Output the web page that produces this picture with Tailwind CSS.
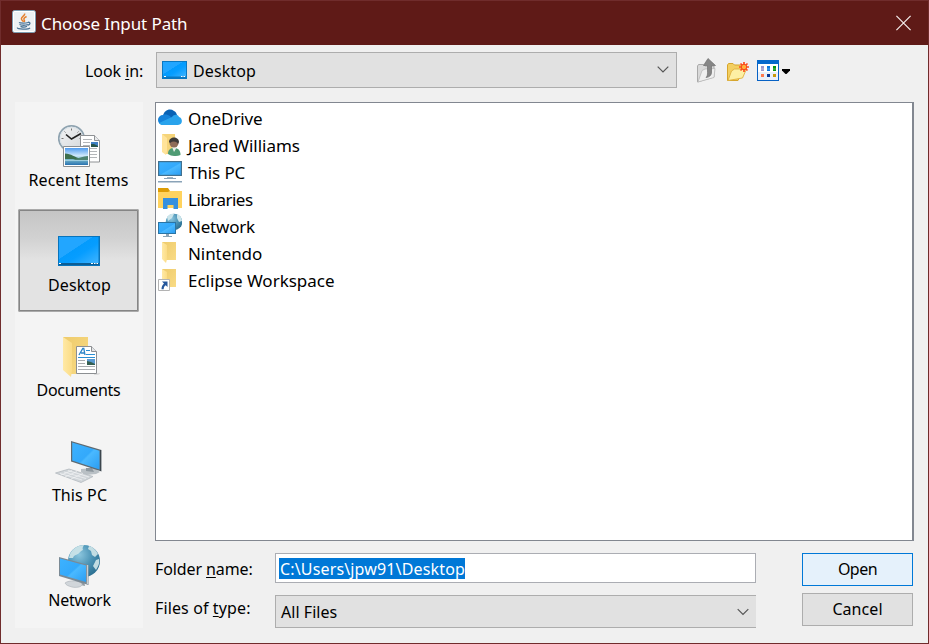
<!DOCTYPE html>
<html lang="en">
<head>
<meta charset="utf-8">
<title>Choose Input Path</title>
<script src="https://cdn.jsdelivr.net/npm/@tailwindcss/browser@4"></script>
</head>
<body class="h-[644px] w-[929px] overflow-hidden font-['Noto_Sans','Open_Sans',sans-serif] text-[16px] text-black">

<!-- shared gradients -->
<svg class="absolute h-0 w-0">
  <defs>
    <linearGradient id="screen" x1="0" y1="0" x2="1" y2="1">
      <stop offset="0" stop-color="#22a6ff"/><stop offset=".42" stop-color="#22a6ff"/><stop offset=".43" stop-color="#039bfd"/><stop offset=".6" stop-color="#069dff"/><stop offset="1" stop-color="#40b4ff"/>
    </linearGradient>
    <linearGradient id="mon" x1="0" y1="0" x2="1" y2="1">
      <stop offset="0" stop-color="#3db2ff"/><stop offset=".5" stop-color="#33a9fb"/><stop offset=".55" stop-color="#4ab9ff"/><stop offset="1" stop-color="#2a9df2"/>
    </linearGradient>
    <linearGradient id="fold" x1="0" y1="0" x2="1" y2="1">
      <stop offset="0" stop-color="#eecb6c"/><stop offset="1" stop-color="#f9db85"/>
    </linearGradient>
    <linearGradient id="flap" x1="0" y1="0" x2="1" y2="0">
      <stop offset="0" stop-color="#ffe9a6"/><stop offset="1" stop-color="#fbdc86"/>
    </linearGradient>
    <radialGradient id="globe" cx=".35" cy=".3" r=".8">
      <stop offset="0" stop-color="#8cc6de"/><stop offset=".5" stop-color="#4c94b6"/><stop offset="1" stop-color="#276a8c"/>
    </radialGradient>
    <linearGradient id="land" x1="0" y1="0" x2="0" y2="1">
      <stop offset="0" stop-color="#4f9bef"/><stop offset=".45" stop-color="#cfe8fb"/><stop offset=".7" stop-color="#6fb2c9"/><stop offset="1" stop-color="#2a72b0"/>
    </linearGradient>
    <linearGradient id="face" x1="0" y1="0" x2="1" y2="1">
      <stop offset="0" stop-color="#f4f5f6"/><stop offset="1" stop-color="#d3d6d9"/>
    </linearGradient>
  </defs>
</svg>

<div class="flex h-[644px] w-[929px] flex-col border border-[#702c2c] bg-[#f0f0f0]">
  <header class="flex h-11 shrink-0 items-center bg-[#5f1a17] pl-[11px] pr-4 text-white">
    <svg class="-mt-[3px] mr-[5px] h-6 w-6 shrink-0" viewBox="0 0 24 24">
      <rect x=".5" y=".5" width="23" height="22" rx="2" fill="#edf1f4" stroke="#7c9cb1"/>
      <rect x="1.5" y="1.5" width="21" height="20" rx="1" fill="none" stroke="#fff"/>
      <path d="M12.600 3.500c1 2-3.200 3-3.200 5.200 0 1.400 1.500 2 2.100 3.100M14.600 6.500c-1.500.7-3.200 1.700-2.600 3 .4.8 1 1.400.2 2.500" fill="none" stroke="#e5812f" stroke-width="1.500"/>
      <path d="M7 12.500c1 .8 7 .8 9 0M7.500 14.500c2 1 6.500 1 8.300 0M8.500 16.300c2 .9 5 .9 6.500 0M16 12.300c2.800-.5 2.600 2.200-.4 3M5.500 17.500c-1 2 11 2.200 12.500.3" fill="none" stroke="#4a7496" stroke-width="1.300"/>
    </svg>
    <h1 class="flex-1 pt-[2px] text-[17px] leading-6 tracking-[-0.1px]">Choose Input Path</h1>
    <svg class="h-4 w-4" viewBox="0 0 16 16"><path d="M.4.9 14.600 15.100M14.600.9.4 15.100" stroke="#f6efee" stroke-width="1.200" fill="none"/></svg>
  </header>

  <div class="flex h-[57px] shrink-0 items-start pt-[7px]">
    <label class="w-[155px] pl-[84px] pt-[7px] leading-6 tracking-[-0.05px]">Look <span class="underline decoration-1 underline-offset-2">i</span>n:</label>
    <div class="flex h-9 w-[521px] items-center border border-[#adadad] bg-[#e1e1e1] pl-[5px] pr-[7px]">
      <svg class="h-[18px] w-[25px]" viewBox="0 0 25 18"><rect width="25" height="18" fill="#0a78c2"/><rect x="1" y="1" width="23" height="14.500" fill="url(#screen)"/><path d="M2 15.500h2M19 15.500h1.500M21.500 15.500H23" stroke="#fff"/></svg>
      <span class="ml-[6px] flex-1 pt-[2px] leading-6 tracking-[0.1px]">Desktop</span>
      <svg class="h-3 w-3" viewBox="0 0 12 12"><path d="m.7 2.700 5.300 5.300 5.300-5.300" fill="none" stroke="#555" stroke-width="1.200"/></svg>
    </div>
    <div class="flex items-start pl-5 pt-[6px]">
      <svg class="h-[25px] w-5" viewBox="0 0 20 25">
        <path d="M.5 24V8l1-1.500h5L8 8h9v11z" fill="#d9d9d9" stroke="#a9a9a9"/>
        <path d="M1 24 5 12.500l3-1.500 10-.5-1 9z" fill="#efefef" stroke="#b9b9b9" stroke-width=".8"/>
        <path d="M11 .5 18.500 7.500h-4V14c0 3-1.500 5-5.500 5.500 1.500-1.500 1.500-3 1.500-5V7.500h-4z" fill="#868686" stroke="#707070" stroke-width=".7"/>
      </svg>
      <svg class="ml-[10px] mt-1 h-5 w-[22px]" viewBox="0 0 22 20">
        <path d="M.5 18.500V3l1-1.500H6L7.500 3H16v5l-5 10.500z" fill="#f3cf61" stroke="#d6a52d"/>
        <path d="M1 18.500 4.500 9l3-2h12L15.500 16z" fill="#fdf0a4" stroke="#dfb140" stroke-width=".9"/>
        <path d="M17 0v10M12 5h10M13.500 1.500l7 7M20.500 1.500l-7 7" stroke="#ff4c1f" stroke-width="1.700"/><circle cx="17" cy="5" r="2.700" fill="#ffb03b" stroke="#f64a1c"/>
      </svg>
      <svg class="ml-2 mt-[2px] h-[21px] w-[22px]" viewBox="0 0 22 21">
        <rect x=".5" y=".5" width="21" height="20" fill="#fff" stroke="#0762c5"/><rect x="1" y="12" width="20" height="8" fill="#e9f0fa"/><rect width="22" height="4" fill="#0669cc"/>
        <path fill="#9c97cb" d="M4 6h3v5H4z"/><path fill="#0c7ae0" d="M10 6h3v5h-3z"/><path fill="#079510" d="M16 6h3v5h-3z"/>
        <path fill="#fff" d="M4 8.500h15v1H4z" opacity=".35"/>
        <path fill="#ff7b50" d="M4 14h3v3H4z"/><path fill="#0a3a99" d="M10 14h3v3h-3z"/><path fill="#c89a0a" d="M16 14h3v3h-3z"/>
      </svg>
      <svg class="ml-[3px] mt-[11px] h-[5px] w-2" viewBox="0 0 8 5"><path d="M0 0h8v1.500L4.500 5h-1L0 1.500z"/></svg>
    </div>
  </div>

  <main class="flex min-h-0 flex-1">
    <nav class="ml-[14px] flex h-[526px] w-32 shrink-0 flex-col gap-[2px] bg-[#f4f4f4] px-[3px] pt-[2px]">
      <div class="flex h-[103px] w-[121px] flex-col items-center pt-5">
        <svg class="h-[44px] w-[42px]" viewBox="0 0 42 44">
          <circle cx="13.500" cy="14.500" r="12.700" fill="url(#face)" stroke="#8fa3b0" stroke-width="1.800"/>
          <circle cx="13.500" cy="14.500" r="11.300" fill="none" stroke="#d9e2e8"/>
          <path d="M13.500 4.500v2M3.500 14.500h2M21.500 14.500h2M6.500 7.500l1 1M20.500 7.500l-1 1" stroke="#777"/>
          <path d="m8 10.500 5.500 4.500L23 9.500" fill="none" stroke="#222" stroke-width="1.600"/>
          <path d="M22.500 11.500h14l5 5V38h-19z" fill="#fff" stroke="#8e9194"/><path d="M36.500 11.500v5h5" fill="#e7e9eb" stroke="#8e9194"/>
          <path d="M25 15.500h9M25 18.500h7M25 21.500h7M25 24.500h14M25 27.500h14M32 30.500h7M32 33.500h7" stroke="#b3b6b9"/>
          <path fill="#3f7fc4" d="M33 18h7v5h-7z"/><path fill="#26544a" d="M33 20h3l4 2v1h-7z"/>
          <path d="M5.500 22.500h26v20h-26z" fill="#fff" stroke="#8b8f92"/><path fill="url(#land)" d="M7 24h23v17H7z"/>
          <path d="M7 29.500c6 0 10 4 16 5.500H7z" fill="#3d6f4d"/><path d="M15 36c5-2 10-3.500 15-4v4z" fill="#4e8371"/><path d="M7 36h23v1H7z" fill="#b4dce8" opacity=".7"/>
        </svg>
        <span class="leading-6 tracking-[0.15px]">Recent Items</span>
      </div>
      <div class="flex h-[103px] w-[121px] flex-col items-center rounded-[2px] border-2 border-[#858585] bg-[linear-gradient(#c5c5c5,#d2d2d2_28%,#e3e3e3_50%,#e3e3e3)] pt-[25px] outline outline-1 -outline-offset-1 outline-[#aaa]">
        <svg class="h-[30px] w-[42px]" viewBox="0 0 42 30"><rect width="42" height="30" fill="#0874bc"/><rect x="1" y="1" width="39.500" height="26" fill="url(#screen)"/><path d="M1 27h40v2H1z" fill="#0b5d95"/><path d="M1 27.500h2M33 27.500h2M36 27.500h1.500M38.500 27.500H40" stroke="#fff"/></svg>
        <span class="ml-[2px] mt-[7px] leading-6 tracking-[0.11px]">Desktop</span>
      </div>
      <div class="flex h-[103px] w-[121px] flex-col items-center pt-[22px]">
        <svg class="h-[42px] w-[42px]" viewBox="0 0 42 42">
          <path d="M5 1h25v37H13z" fill="url(#fold)"/><path d="M5 1l9 6v27l-1 7-8-7z" fill="url(#flap)"/>
          <path d="M36 37h7l-3 2h-4z" fill="#ddd"/>
          <path d="M18.500 10.500h15l5 5v22h-20z" fill="#fff" stroke="#8c8f92"/><path d="M33.500 10.500v5h5" fill="#e3e5e7" stroke="#8c8f92"/>
          <path d="m21 19 3.800-6.500h1L27 19M23 17h3.500" fill="none" stroke="#2a84c8" stroke-width="1.300"/>
          <path d="M28 14.500h4M28 18.500h9M20 21.500h17" stroke="#2b8fd3"/><path d="M20 24.500h7M20 27.500h7M20 30.500h17M20 33.500h17" stroke="#a9acb0"/>
          <path fill="#5a9ad2" d="M29 23h8v6h-8z"/><path fill="#355f51" d="m29 25 4 1 4 2v1h-8z"/>
        </svg>
        <span class="leading-6 tracking-[-0.25px]">Documents</span>
      </div>
      <div class="flex h-[103px] w-[121px] flex-col items-center pt-[22px]">
        <svg class="h-[42px] w-[50px]" viewBox="0 0 50 42">
          <path d="m27 28 13-1 6 4-4 2-10 1-5-3z" fill="#b9c0c5"/><path d="m32 27 6 0 2 4-8-1z" fill="#8d979e"/>
          <path d="M1.500 32 15 28l24 7.500L27 41.500z" fill="#d0d5d9" stroke="#b4babf" stroke-width=".8"/>
          <path d="m6 32.500 22 6.500M10 31l22 6.500M14 29.500l21 6.500M11 36l12-5.500M17 38l12-5.500M7 34l11-4.500" stroke="#f2f4f5" stroke-width=".7"/>
          <path d="M17 0 47.500 9v21.500L17 20.500z" fill="#5e6a72"/><path d="m18.200 1.500 27.300 8.200v18.800l-27.300-9z" fill="url(#mon)"/><path d="M46.500 9v21" stroke="#3c464d"/>
        </svg>
        <span class="ml-[2px] leading-6 tracking-[0.1px]">This PC</span>
      </div>
      <div class="flex h-[103px] w-[121px] flex-col items-center pt-[21px]">
        <svg class="h-[43px] w-[42px]" viewBox="0 0 42 43">
          <circle cx="26" cy="16" r="16" fill="url(#globe)"/>
          <path d="M12 9C15 3 21 0 26 0c-1 2-2 3-1 5-3 1-3 3-5 4s-4 1-5 4l-4 0zM31 1c4 1 7 4 9 8l-3 3-3-2-1-4-3-2zM38 15l3-1c1 4-1 8-3 11l-3-4z" fill="#cfe6e9" opacity=".9"/>
          <path d="m17 35 9 1 1 5-9-2z" fill="#929ca3"/><path d="M7 38c4-3 14-3 17 1 1 3-6 4-10 3s-6-2-7-4z" fill="#d1d6da" stroke="#b2b8bd" stroke-width=".7"/>
          <path d="m1 12 29.500 8v20L1 31z" fill="#7b8a95"/><path d="m2 13.500 26 7V37L2 29.500z" fill="url(#mon)"/><path d="M29.500 20v19" stroke="#c8ced2" stroke-width="1.300"/>
        </svg>
        <span class="ml-[2px] leading-6 tracking-[-0.3px]">Network</span>
      </div>
    </nav>

    <div class="ml-3 w-[759px]">
      <ul class="h-[439px] border border-r-2 border-[#828790] bg-white pl-[2px] pt-[2px] text-[17px] [&>li]:flex [&>li]:h-[27px] [&>li]:items-center [&_svg]:mr-[6px] [&_svg]:h-[24px] [&_svg]:w-[24px] [&_svg]:-mt-[3px]">
        <li><svg viewBox="0 0 24 24"><path d="M5 11C6 5 12 3 16 6c2 1 2.500 2.500 3 4l-6 4z" fill="#0862b5"/><path d="M5 20a5 5 0 0 1 0-10c3-1 5 0 7 1l5 9z" fill="#1582d9"/><path d="M14 12c2-3 6-3 7 0 4 1 4 8-1 8H5c-2 0-3-.5-4-2z" fill="#29a3ec"/></svg><span class="tracking-[-0.1px]">OneDrive</span></li>
        <li><svg viewBox="0 0 24 24"><path d="M4 2h13v20H8z" fill="#f5d47a"/><path d="m4 2 5 4v13l-1 4-4-3z" fill="#ffe39a"/><path d="M10 22c0-5 3-6 6-6s6.500 1 6.500 7c-4 1.500-9 1.500-12.500-1z" fill="#4f9b74"/><path d="m14 15 2 5 3-5z" fill="#e9efe9"/><circle cx="16" cy="11" r="4.500" fill="#8e6c59"/><path d="M11 10c0-6 10-6 10 0l-1 2c-2-3-5-3-8-1z" fill="#3d3a39"/></svg><span class="tracking-[-0.02px]">Jared Williams</span></li>
        <li><svg viewBox="0 0 24 24"><path d="M0 2h24v15H0z" fill="#42718f"/><path d="M1.200 3.200h21.600v12.600H1.200z" fill="url(#mon)"/><path d="M9 18h6v1H9z" fill="#9eb4c2"/><path d="M6 19h12v1H6zM0 22h24v1.500H0z" fill="#8aa3b8"/></svg><span class="tracking-[-0.1px]">This PC</span></li>
        <li><svg viewBox="0 0 24 24"><path d="M0 2h10l2 3v5H0z" fill="#dd9d07"/><path d="M0 6h10l2-1h12v17H0z" fill="#ffd35f"/><path d="M5 12h15v11h-4.500v-4h-6v4H5z" fill="#3590df"/></svg><span class="tracking-[-0.5px]">Libraries</span></li>
        <li><svg viewBox="0 0 24 24"><circle cx="16" cy="9" r="8.300" fill="url(#globe)"/><path d="M9 4c2-3 5-4 7-3l-2 4-4 3zM19 1c3 1 5 4 5 7l-3 1-2-4z" fill="#cbe5eb"/><path d="M0 9h18v12H0z" fill="#2b75a5"/><path d="M1 10h16v10H1z" fill="url(#mon)"/><path d="M8 21h3v2H8zM5 23h9v1H5z" fill="#8ba4b5"/></svg><span class="tracking-[-0.22px]">Network</span></li>
        <li><svg viewBox="0 0 24 24"><path d="M4 2h14v18H8z" fill="url(#fold)"/><path d="m4 2 5 3v14l-1 4-4-4z" fill="url(#flap)"/></svg><span class="tracking-[-0.07px]">Nintendo</span></li>
        <li><svg viewBox="0 0 24 24"><path d="M4 2h14v18H8z" fill="url(#fold)"/><path d="m4 2 5 3v14l-1 3-4-4z" fill="url(#flap)"/><path d="M.5 12.500h11v11H.5z" fill="#fff" stroke="#b3b3b3"/><path d="M4 14.500h5.500V20L7.700 18.200c-1.500 1-2 2-2 4H3.500c0-2.500.8-4.200 2.500-5.700z" fill="#24569c"/></svg><span class="tracking-[-0.01px]">Eclipse Workspace</span></li>
      </ul>

      <div class="flex justify-between pr-px pt-3">
        <div class="flex flex-col gap-3">
          <div class="flex h-[30px] items-center">
            <label class="w-[120px] pt-px leading-6 tracking-[-0.1px]">Folder <span class="underline decoration-1 underline-offset-2">n</span>ame:</label>
            <div class="flex h-[30px] w-[481px] items-center border border-[#abadb3] bg-white pl-[3px]"><span class="mt-px h-[21px] bg-[#0078d7] pl-px leading-[22px] tracking-[0.15px] text-white">C:\Users\jpw91\Desktop</span></div>
          </div>
          <div class="flex h-[33px] items-start">
            <label class="w-[120px] pt-[1px] leading-6 tracking-[0.12px]">Files of <span class="underline decoration-1 underline-offset-2">t</span>ype:</label>
            <div class="flex h-[33px] w-[481px] items-center border border-r-0 border-[#adadad] bg-[#e1e1e1] pl-[5px] pr-[7px]"><span class="flex-1 leading-6 tracking-[0.05px]">All Files</span><svg class="h-3 w-3" viewBox="0 0 12 12"><path d="m.7 3.200 5.300 5.300 5.300-5.300" fill="none" stroke="#555" stroke-width="1.200"/></svg></div>
          </div>
        </div>
        <div class="flex flex-col gap-[7px]">
          <button class="h-[33px] w-[111px] border border-[#0078d7] bg-[#e5f1fb] pb-px leading-6 tracking-[-0.5px]">Open</button>
          <button class="h-[33px] w-[111px] border border-[#adadad] bg-[#e1e1e1] pb-px leading-6 tracking-[0.06px]">Cancel</button>
        </div>
      </div>
    </div>
  </main>
</div>
</body>
</html>
